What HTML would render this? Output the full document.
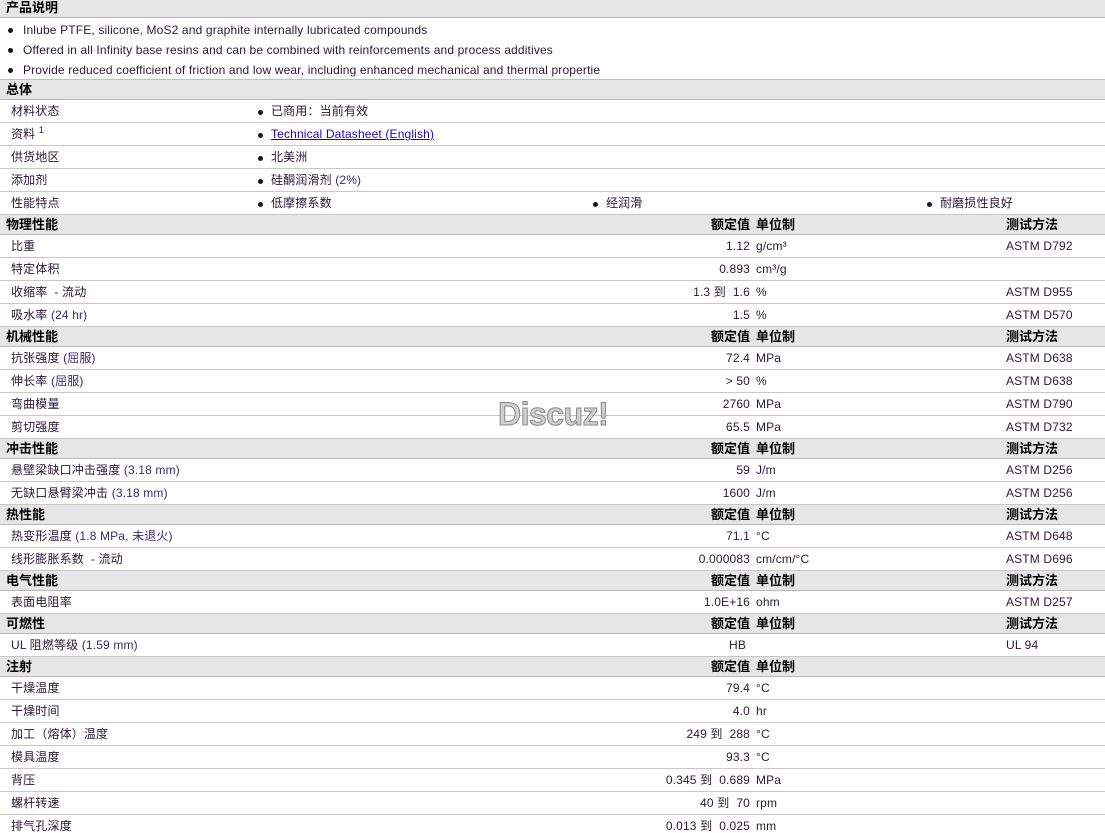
<!DOCTYPE html>
<html><head><meta charset="utf-8">
<style>
*{margin:0;padding:0;box-sizing:border-box}
html,body{width:1105px;height:833px;overflow:hidden;background:#fff}
body{font-family:"Liberation Sans","Noto Sans CJK SC",sans-serif;font-size:12px;color:#2a1838;position:relative;letter-spacing:0.15px}
.h{position:relative;height:20px;background:#e6e6e6;border-bottom:1px solid #b8b8b8;font-weight:bold;font-size:13px;color:#000;line-height:19px;letter-spacing:0}
.h .t{position:absolute;left:6px;top:0}
.r{position:relative;height:23px;border-bottom:1px solid #c8c8c8;line-height:23px}
.l{position:absolute;left:11px;top:0;white-space:nowrap}
.v{position:absolute;right:355px;top:0;white-space:nowrap;text-align:right}
.u{position:absolute;left:756px;top:0;white-space:nowrap}
.m{position:absolute;left:1006px;top:0;white-space:nowrap}
.p{color:#3a2a70}
.b{position:absolute;top:0;white-space:nowrap}
.b:before{content:"";position:absolute;left:-13px;top:10px;width:5px;height:5px;border-radius:50%;background:#1a1030}
.blk{height:62px;border-bottom:1px solid #c0c0c0;position:relative}
.blk div{position:absolute;left:23px;white-space:nowrap;line-height:20px}
.blk div:before{content:"";position:absolute;left:-15px;top:8px;width:5px;height:5px;border-radius:50%;background:#1a1030}
a{color:#2200cc;text-decoration:underline}
sup{position:relative;top:-5px;font-size:9px;vertical-align:baseline;line-height:0}
.wm{position:absolute;left:498px;top:396px;font-size:32px;font-weight:bold;color:#d0d0d0;-webkit-text-stroke:1px #888;letter-spacing:-0.5px;font-family:"Liberation Sans",sans-serif}
</style></head><body>
<div class="h" style="height:18px;line-height:16px"><span class="t">产品说明</span></div>
<div class="blk">
<div style="top:2px">Inlube PTFE, silicone, MoS2 and graphite internally lubricated compounds</div>
<div style="top:22px">Offered in all Infinity base resins and can be combined with reinforcements and process additives</div>
<div style="top:42px">Provide reduced coefficient of friction and low wear, including enhanced mechanical and thermal propertie</div>
</div>
<div class="h"><span class="t">总体</span></div>
<div class="r"><span class="l">材料状态</span><span class="b" style="left:271px">已商用：当前有效</span></div>
<div class="r"><span class="l">资料 <sup>1</sup></span><span class="b" style="left:271px"><a>Technical Datasheet (English)</a></span></div>
<div class="r"><span class="l">供货地区</span><span class="b" style="left:271px">北美洲</span></div>
<div class="r"><span class="l">添加剂</span><span class="b" style="left:271px">硅酮润滑剂 <span class="p">(2%)</span></span></div>
<div class="r"><span class="l">性能特点</span><span class="b" style="left:271px">低摩擦系数</span><span class="b" style="left:606px">经润滑</span><span class="b" style="left:940px">耐磨损性良好</span></div>

<div class="h"><span class="t">物理性能</span><span class="v">额定值</span><span class="u">单位制</span><span class="m">测试方法</span></div>
<div class="r"><span class="l">比重</span><span class="v">1.12</span><span class="u">g/cm³</span><span class="m">ASTM D792</span></div>
<div class="r"><span class="l">特定体积</span><span class="v">0.893</span><span class="u">cm³/g</span></div>
<div class="r"><span class="l">收缩率 &nbsp;- 流动</span><span class="v">1.3 到 &nbsp;1.6</span><span class="u">%</span><span class="m">ASTM D955</span></div>
<div class="r"><span class="l">吸水率 <span class="p">(24 hr)</span></span><span class="v">1.5</span><span class="u">%</span><span class="m">ASTM D570</span></div>

<div class="h"><span class="t">机械性能</span><span class="v">额定值</span><span class="u">单位制</span><span class="m">测试方法</span></div>
<div class="r"><span class="l">抗张强度 <span class="p">(屈服)</span></span><span class="v">72.4</span><span class="u">MPa</span><span class="m">ASTM D638</span></div>
<div class="r"><span class="l">伸长率 <span class="p">(屈服)</span></span><span class="v">&gt; 50</span><span class="u">%</span><span class="m">ASTM D638</span></div>
<div class="r"><span class="l">弯曲模量</span><span class="v">2760</span><span class="u">MPa</span><span class="m">ASTM D790</span></div>
<div class="r"><span class="l">剪切强度</span><span class="v">65.5</span><span class="u">MPa</span><span class="m">ASTM D732</span></div>

<div class="h"><span class="t">冲击性能</span><span class="v">额定值</span><span class="u">单位制</span><span class="m">测试方法</span></div>
<div class="r"><span class="l">悬壁梁缺口冲击强度 <span class="p">(3.18 mm)</span></span><span class="v">59</span><span class="u">J/m</span><span class="m">ASTM D256</span></div>
<div class="r"><span class="l">无缺口悬臂梁冲击 <span class="p">(3.18 mm)</span></span><span class="v">1600</span><span class="u">J/m</span><span class="m">ASTM D256</span></div>

<div class="h"><span class="t">热性能</span><span class="v">额定值</span><span class="u">单位制</span><span class="m">测试方法</span></div>
<div class="r"><span class="l">热变形温度 <span class="p">(1.8 MPa, 未退火)</span></span><span class="v">71.1</span><span class="u">°C</span><span class="m">ASTM D648</span></div>
<div class="r"><span class="l">线形膨胀系数 &nbsp;- 流动</span><span class="v">0.000083</span><span class="u">cm/cm/°C</span><span class="m">ASTM D696</span></div>

<div class="h"><span class="t">电气性能</span><span class="v">额定值</span><span class="u">单位制</span><span class="m">测试方法</span></div>
<div class="r"><span class="l">表面电阻率</span><span class="v">1.0E+16</span><span class="u">ohm</span><span class="m">ASTM D257</span></div>

<div class="h"><span class="t">可燃性</span><span class="v">额定值</span><span class="u">单位制</span><span class="m">测试方法</span></div>
<div class="r"><span class="l">UL 阻燃等级 <span class="p">(1.59 mm)</span></span><span class="v" style="right:359px">HB</span><span class="m">UL 94</span></div>

<div class="h"><span class="t">注射</span><span class="v">额定值</span><span class="u">单位制</span></div>
<div class="r"><span class="l">干燥温度</span><span class="v">79.4</span><span class="u">°C</span></div>
<div class="r"><span class="l">干燥时间</span><span class="v">4.0</span><span class="u">hr</span></div>
<div class="r"><span class="l">加工（熔体）温度</span><span class="v">249 到 &nbsp;288</span><span class="u">°C</span></div>
<div class="r"><span class="l">模具温度</span><span class="v">93.3</span><span class="u">°C</span></div>
<div class="r"><span class="l">背压</span><span class="v">0.345 到 &nbsp;0.689</span><span class="u">MPa</span></div>
<div class="r"><span class="l">螺杆转速</span><span class="v">40 到 &nbsp;70</span><span class="u">rpm</span></div>
<div class="r"><span class="l">排气孔深度</span><span class="v">0.013 到 &nbsp;0.025</span><span class="u">mm</span></div>

<div class="wm">Discuz!</div>
</body></html>
